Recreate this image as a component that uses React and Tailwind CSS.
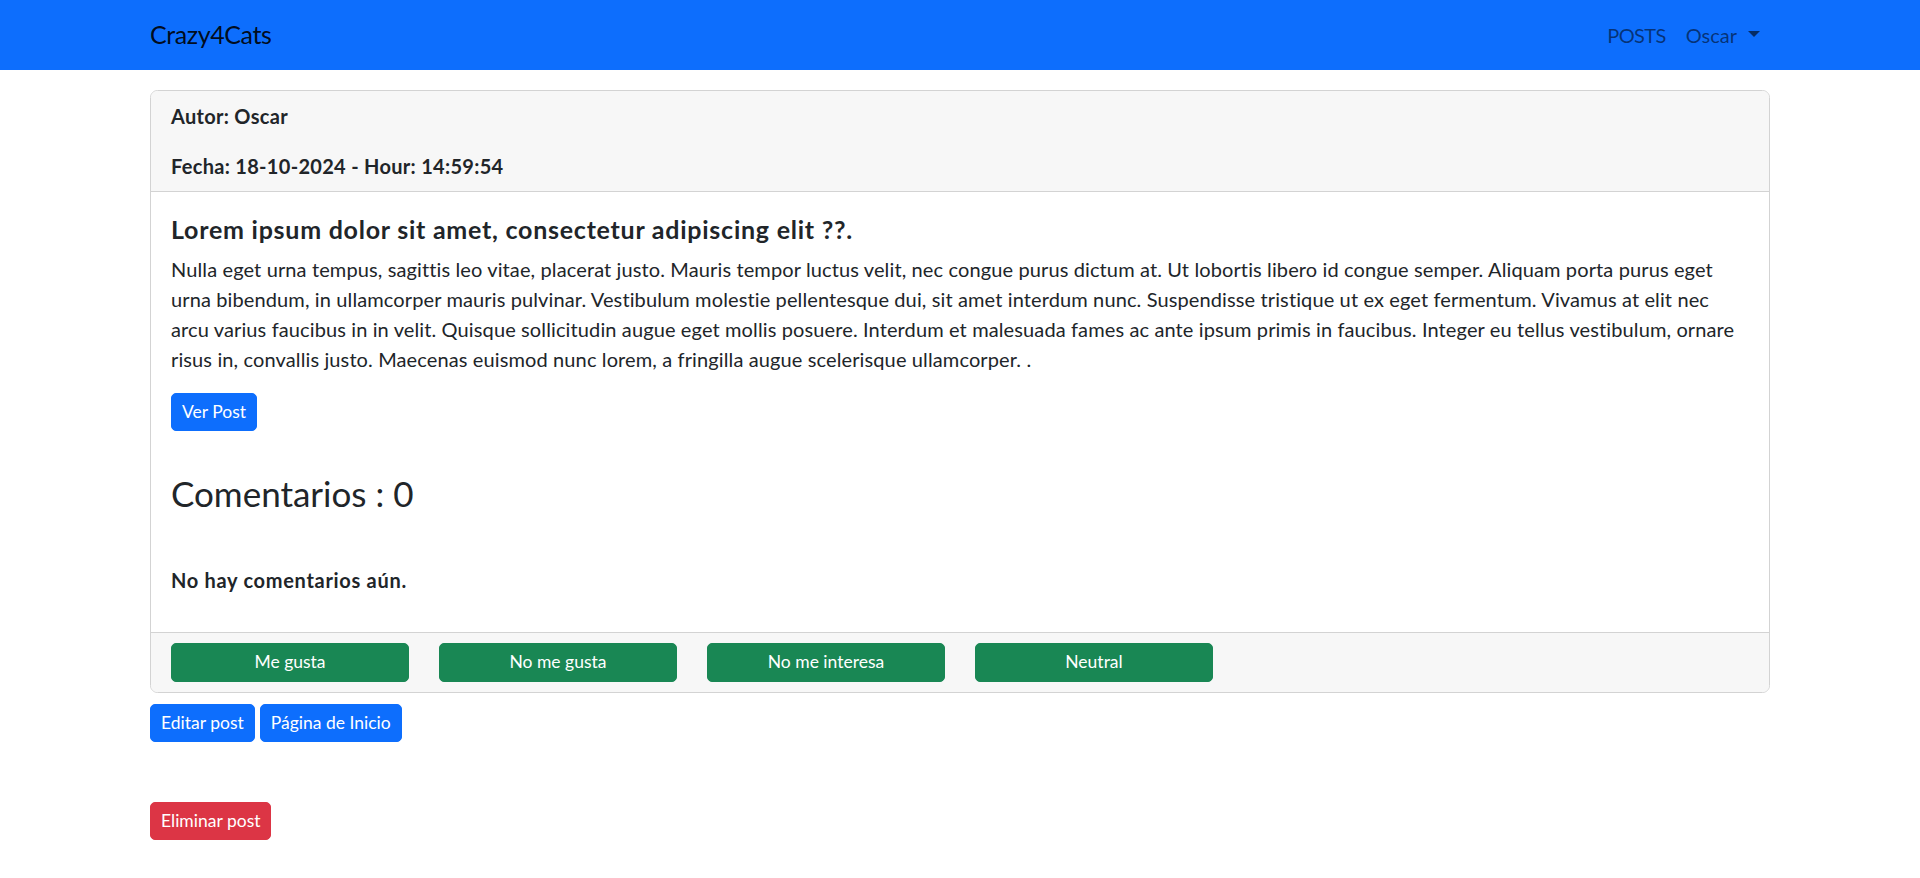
import React from "react";

function Btn({ color, className = "", children }) {
  return (
    <a
      className={`inline-block self-start rounded-[5px] border px-[10px] py-[5px] text-center text-[17.5px] leading-[26.25px] text-white ${color} ${className}`}
    >
      {children}
    </a>
  );
}

const lines = [
  "Nulla eget urna tempus, sagittis leo vitae, placerat justo. Mauris tempor luctus velit, nec congue purus dictum at. Ut lobortis libero id congue semper. Aliquam porta purus eget",
  "urna bibendum, in ullamcorper mauris pulvinar. Vestibulum molestie pellentesque dui, sit amet interdum nunc. Suspendisse tristique ut ex eget fermentum. Vivamus at elit nec",
  "arcu varius faucibus in in velit. Quisque sollicitudin augue eget mollis posuere. Interdum et malesuada fames ac ante ipsum primis in faucibus. Integer eu tellus vestibulum, ornare",
  "risus in, convallis justo. Maecenas euismod nunc lorem, a fringilla augue scelerisque ullamcorper. .",
];

export default function App() {
  return (
    <div className="min-h-screen bg-white font-['Lato',sans-serif] text-[20px] leading-[30px] text-[#212529]">
      <nav className="bg-[#0d6efd] py-[10px]">
        <div className="mx-auto flex w-[1650px] items-center justify-between px-[15px]">
          <a className="py-[6.25px] text-[25px] leading-[37.5px] tracking-[-0.4px] text-[rgba(0,0,0,0.9)]">Crazy4Cats</a>
          <ul className="flex">
            <li>
              <a className="block px-[10px] py-[10px] tracking-[-0.6px] text-[rgba(0,0,0,0.55)]">POSTS</a>
            </li>
            <li>
              <a className="flex items-center px-[10px] py-[10px] text-[rgba(0,0,0,0.55)]">
                Oscar
                <span className="ml-[11px] mb-[2px] inline-block h-0 w-0 border-x-[6px] border-t-[6px] border-x-transparent border-t-[rgba(0,0,0,0.6)]" />
              </a>
            </li>
          </ul>
        </div>
      </nav>

      <main className="mx-auto w-[1650px] px-[15px]">
        <div className="mt-[20px] rounded-[7.5px] border border-[#d3d3d3]">
          <div className="rounded-t-[6.5px] border-b border-[#d3d3d3] bg-[#f7f7f7] px-[20px] py-[10px]">
            <p className="mb-[20px] font-bold tracking-[0.3px]">Autor: Oscar</p>
            <p className="font-bold tracking-[0.3px]">Fecha: 18-10-2024 - Hour: 14:59:54</p>
          </div>

          <div className="flex flex-col px-[20px] pt-[20px] pb-[37px]">
            <h5 className="mb-[8px] text-[25px] font-bold leading-[34px] tracking-[0.03em]">
              Lorem ipsum dolor sit amet, consectetur adipiscing elit ??.
            </h5>
            <p className="mb-[19px] tracking-[0.12px]">
              {lines.map((l, i) => (
                <span key={i} className="block whitespace-nowrap">
                  {l}
                </span>
              ))}
            </p>
            <Btn color="bg-[#0d6efd] border-[#0d6efd]">Ver Post</Btn>
            <h3 className="mt-[41px] text-[35px] font-normal leading-[42px]">Comentarios : 0</h3>
            <p className="mt-[51px] font-bold tracking-[0.035em]">No hay comentarios aún.</p>
          </div>

          <div className="flex gap-[30px] rounded-b-[6.5px] border-t border-[#d3d3d3] bg-[#f7f7f7] px-[20px] py-[10px]">
            {["Me gusta", "No me gusta", "No me interesa", "Neutral"].map((t) => (
              <Btn key={t} color="bg-[#198754] border-[#198754]" className="w-[238px]">
                {t}
              </Btn>
            ))}
          </div>
        </div>

        <div className="mt-[11px] flex gap-[5px]">
          <Btn color="bg-[#0d6efd] border-[#0d6efd]">Editar post</Btn>
          <Btn color="bg-[#0d6efd] border-[#0d6efd]">Página de Inicio</Btn>
        </div>
        <div className="mt-[60px] flex">
          <Btn color="bg-[#dc3545] border-[#dc3545]">Eliminar post</Btn>
        </div>
      </main>
    </div>
  );
}
